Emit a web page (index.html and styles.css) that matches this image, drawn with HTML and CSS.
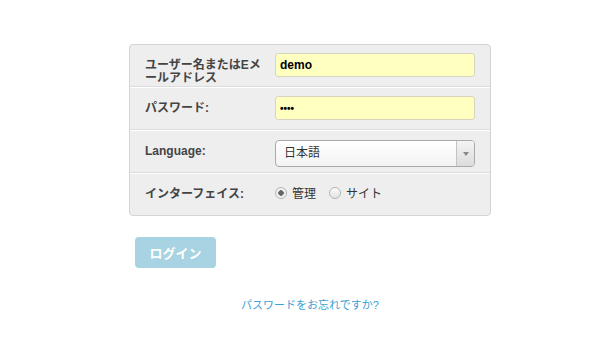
FILE: index.html
```html
<!DOCTYPE html>
<html lang="ja">
<head>
    <meta charset="UTF-8">
    <title>ログイン</title>
    <link rel="stylesheet" href="styles.css">
</head>
<body>
    <div class="login">
        <form class="panel">
            <div class="field">
                <label class="field-label">ユーザー名またはEメールアドレス</label>
                <input class="text-input" type="text" value="demo">
            </div>
            <div class="field">
                <label class="field-label">パスワード:</label>
                <input class="text-input pass" type="password" value="demo">
            </div>
            <div class="field">
                <label class="field-label">Language:</label>
                <div class="select">
                    <span class="select-value">日本語</span>
                    <span class="select-arrow"></span>
                </div>
            </div>
            <div class="field">
                <label class="field-label">インターフェイス:</label>
                <div class="radios">
                    <label class="radio"><input type="radio" name="iface" checked> 管理</label>
                    <label class="radio"><input type="radio" name="iface"> サイト</label>
                </div>
            </div>
        </form>

        <button class="login-btn" type="button">ログイン</button>

        <div class="forgot">
            <a href="#">パスワードをお忘れですか?</a>
        </div>
    </div>
</body>
</html>
```

FILE: styles.css
```css
body {
    margin: 0;
    background: #fff;
    font-family: 'Liberation Sans', 'Noto Sans CJK JP', sans-serif;
    font-size: 12px;
    color: #444;
}

.login {
    width: 362px;
    margin: 44px 0 0 129px;
}

.panel {
    background: #eee;
    border: 1px solid #d4d4d4;
    border-radius: 4px;
}

.field {
    display: grid;
    grid-template-columns: 130px 1fr;
    align-items: start;
    height: 33px;
    padding: 8px 15px 0;
    border-top: 1px solid #fff;
    border-bottom: 1px solid #dcdcdc;
}

.field:first-child {
    border-top: none;
}

.field:last-child {
    border-bottom: none;
}

.field-label {
    font-weight: bold;
    line-height: 13px;
    padding-top: 6px;
    padding-right: 6px;
    color: #444;
}

.text-input {
    box-sizing: border-box;
    width: 100%;
    height: 24px;
    margin: 0;
    padding: 0 4px;
    background: #ffffc0;
    border: 1px solid #d6d6c0;
    border-radius: 3px;
    font-family: inherit;
    font-size: 12px;
    font-weight: bold;
    color: #000;
    outline: none;
}

.text-input.pass {
    font-size: 10px;
}

.select {
    display: flex;
    box-sizing: border-box;
    height: 27px;
    margin-top: 1px;
    background: linear-gradient(#fff, #f3f3f3);
    border: 1px solid #aaa;
    border-radius: 4px;
}

.select-value {
    flex: 1;
    padding-left: 8px;
    line-height: 25px;
    font-size: 12px;
    color: #333;
}

.select-arrow {
    display: flex;
    justify-content: center;
    align-items: center;
    width: 17px;
    border-left: 1px solid #c4c4c4;
    border-radius: 0 3px 3px 0;
    background: linear-gradient(#f4f4f4, #dcdcdc);
}

.select-arrow:after {
    content: '';
    border-left: 3px solid transparent;
    border-right: 3px solid transparent;
    border-top: 4px solid #888;
}

.radios {
    display: flex;
    gap: 13px;
    padding-top: 2px;
}

.radio {
    display: flex;
    align-items: center;
    gap: 5px;
    font-size: 12px;
    color: #333;
}

.radio input {
    appearance: none;
    width: 12px;
    height: 12px;
    margin: 0;
    border: 1px solid #b4b4b4;
    border-radius: 50%;
    background: linear-gradient(#fbfbfb, #e4e4e4);
}

.radio input:checked {
    background: radial-gradient(circle, #666 0, #666 2.5px, #f0f0f0 3px);
}

.login-btn {
    display: block;
    width: 81px;
    height: 31px;
    margin: 21px 0 0 6px;
    background: #a8d3e2;
    border: none;
    border-radius: 4px;
    font-family: inherit;
    font-size: 13px;
    font-weight: bold;
    color: #fff;
}

.forgot {
    margin-top: 28px;
    text-align: center;
    font-size: 11px;
}

.forgot a {
    color: #3d9fd3;
    text-decoration: none;
}
```
